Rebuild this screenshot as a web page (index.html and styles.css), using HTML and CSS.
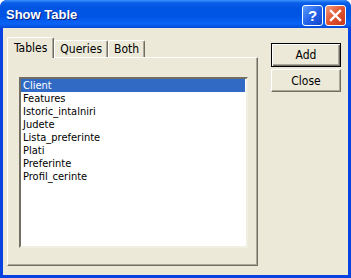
FILE: index.html
```html
<!DOCTYPE html>
<html lang="en">
<head>
  <meta charset="UTF-8">
  <title>Show Table</title>
  <link rel="stylesheet" href="styles.css">
</head>
<body>
  <div class="window">
    <div class="titlebar">
      <span class="title">Show Table</span>
      <div class="title-buttons">
        <div class="tbtn help">?</div>
        <div class="tbtn close">
          <svg width="13" height="13" viewBox="0 0 13 13">
            <path d="M2 2 L11 11 M11 2 L2 11" stroke="#fff" stroke-width="2.4" stroke-linecap="square"/>
          </svg>
        </div>
      </div>
    </div>

    <div class="client">
      <div class="tabbox">
        <div class="tabstrip">
          <div class="tab active">Tables</div>
          <div class="tab">Queries</div>
          <div class="tab">Both</div>
        </div>
        <div class="panel">
          <div class="listbox">
            <div class="item selected">Client</div>
            <div class="item">Features</div>
            <div class="item">Istoric_intalniri</div>
            <div class="item">Judete</div>
            <div class="item">Lista_preferinte</div>
            <div class="item">Plati</div>
            <div class="item">Preferinte</div>
            <div class="item">Profil_cerinte</div>
          </div>
        </div>
      </div>

      <div class="buttons">
        <div class="button default">Add</div>
        <div class="button">Close</div>
      </div>
    </div>
  </div>
</body>
</html>
```

FILE: styles.css
```css
body {
  margin: 0;
  padding: 0;
  font-family: "DejaVu Sans Condensed", "DejaVu Sans", sans-serif;
  font-size: 11px;
  background: #fff;
}
.window {
  width: 351px;
  height: 278px;
  display: flex;
  flex-direction: column;
  background: #0842e0;
  box-sizing: border-box;
  border-radius: 7px 7px 0 0;
  overflow: hidden;
}
.titlebar {
  height: 28px;
  flex: none;
  display: flex;
  align-items: center;
  justify-content: space-between;
  padding: 0 5px 0 6px;
  background: linear-gradient(to bottom, #3d95ff 0%, #0a5fe8 10%, #0054e3 30%, #0055e6 60%, #0a63f5 85%, #0549d8 100%);
}
.title {
  color: #fff;
  font-family: "Liberation Sans", Arial, sans-serif;
  font-weight: bold;
  font-size: 13px;
  text-shadow: 1px 1px 0 #0a1f7a;
  margin-top: 1px;
}
.title-buttons {
  display: flex;
  gap: 2px;
  margin-top: 2px;
}
.tbtn {
  width: 19px;
  height: 19px;
  border: 1px solid #fff;
  border-radius: 3px;
  display: flex;
  align-items: center;
  justify-content: center;
  color: #fff;
  font-family: "Liberation Sans", Arial, sans-serif;
  font-weight: bold;
  font-size: 15px;
}
.help {
  background: linear-gradient(135deg, #5d9bff 0%, #2160e8 55%, #1547c8 100%);
}
.close {
  background: linear-gradient(135deg, #f29a7c 0%, #e2532f 50%, #c4381a 100%);
}
.client {
  flex: 1;
  margin: 0 3px 3px 3px;
  background: #ece9d8;
  display: flex;
  padding: 9px 7px 9px 4px;
}
.tabbox {
  width: 251px;
  display: flex;
  flex-direction: column;
}
.tabstrip {
  display: flex;
  align-items: flex-end;
  height: 20px;
  position: relative;
  z-index: 1;
}
.tab {
  height: 17px;
  box-sizing: border-box;
  padding: 1px 5px 0 5px;
  border-top: 1px solid #fff;
  border-left: 1px solid #fff;
  border-right: 1px solid #716f64;
  box-shadow: inset -1px 0 0 #aca899;
  border-radius: 2px 2px 0 0;
  color: #000;
  font-size: 12px;
}
.tab.active {
  height: 21px;
  margin-bottom: -1px;
  padding: 3px 6px 0 6px;
  background: #ece9d8;
}
.panel {
  flex: 1;
  border-top: 1px solid #fff;
  border-left: 1px solid #fff;
  border-right: 1px solid #716f64;
  border-bottom: 1px solid #716f64;
  box-shadow: inset -1px -1px 0 #aca899;
  padding: 19px 9px 17px 11px;
}
.listbox {
  height: 100%;
  box-sizing: border-box;
  background: #fff;
  border-top: 2px solid #716f64;
  border-left: 2px solid #716f64;
  border-right: 2px solid #f1efe2;
  border-bottom: 2px solid #f1efe2;
  padding: 0;
}
.item {
  height: 13px;
  line-height: 13px;
  padding-left: 2px;
  margin-right: 1px;
  color: #000;
  font-size: 11px;
  white-space: nowrap;
}
.item.selected {
  background: #316ac5;
  color: #fff;
}
.buttons {
  margin-left: 13px;
  margin-top: 6px;
  display: flex;
  flex-direction: column;
  gap: 2px;
}
.button {
  width: 70px;
  height: 23px;
  box-sizing: border-box;
  display: flex;
  align-items: center;
  justify-content: center;
  background: #ece9d8;
  border-top: 1px solid #fff;
  border-left: 1px solid #fff;
  border-right: 1px solid #716f64;
  border-bottom: 1px solid #716f64;
  box-shadow: inset -1px -1px 0 #aca899;
  color: #000;
  font-size: 12px;
}
.button.default {
  border: 1px solid #000;
  box-shadow: inset 1px 1px 0 #fff, inset -1px -1px 0 #716f64, inset -2px -2px 0 #aca899;
  height: 24px;
}
```
